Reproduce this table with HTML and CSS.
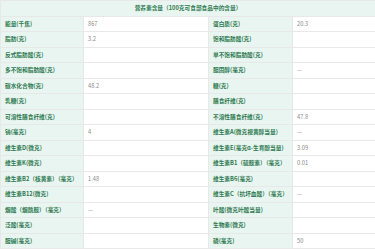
FILE: index.html
```html
<!DOCTYPE html>
<html lang="zh-CN">
<head>
<meta charset="utf-8">
<link rel="stylesheet" href="styles.css">
</head>
<body>
<table class="nutri">
  <colgroup>
    <col class="c-l1"><col class="c-v1"><col class="c-l2"><col class="c-v2">
  </colgroup>
  <thead>
    <tr><th colspan="4" class="head">营养素含量（100克可食部食品中的含量）</th></tr>
  </thead>
  <tbody>
    <tr><td class="lab">能量(千焦)</td><td class="val">867</td><td class="lab">蛋白质(克)</td><td class="val">20.3</td></tr>
    <tr><td class="lab">脂肪(克)</td><td class="val">3.2</td><td class="lab">饱和脂肪酸(克)</td><td class="val"></td></tr>
    <tr><td class="lab">反式脂肪酸(克)</td><td class="val"></td><td class="lab">单不饱和脂肪酸(克)</td><td class="val"></td></tr>
    <tr><td class="lab">多不饱和脂肪酸(克)</td><td class="val"></td><td class="lab">胆固醇(毫克)</td><td class="val">—</td></tr>
    <tr><td class="lab">碳水化合物(克)</td><td class="val">48.2</td><td class="lab">糖(克)</td><td class="val"></td></tr>
    <tr><td class="lab">乳糖(克)</td><td class="val"></td><td class="lab">膳食纤维(克)</td><td class="val"></td></tr>
    <tr><td class="lab">可溶性膳食纤维(克)</td><td class="val"></td><td class="lab">不溶性膳食纤维(克)</td><td class="val">47.8</td></tr>
    <tr><td class="lab">钠(毫克)</td><td class="val">4</td><td class="lab">维生素A(微克视黄醇当量)</td><td class="val">—</td></tr>
    <tr><td class="lab">维生素D(微克)</td><td class="val"></td><td class="lab">维生素E(毫克α-生育酚当量)</td><td class="val">3.09</td></tr>
    <tr><td class="lab">维生素K(微克)</td><td class="val"></td><td class="lab">维生素B1（硫胺素）（毫克）</td><td class="val">0.01</td></tr>
    <tr><td class="lab">维生素B2（核黄素）（毫克）</td><td class="val">1.48</td><td class="lab">维生素B6(毫克)</td><td class="val"></td></tr>
    <tr><td class="lab">维生素B12(微克)</td><td class="val"></td><td class="lab">维生素C（抗坏血酸）（毫克）</td><td class="val">—</td></tr>
    <tr><td class="lab">烟酸（烟酰胺）（毫克）</td><td class="val">—</td><td class="lab">叶酸(微克叶酸当量)</td><td class="val"></td></tr>
    <tr><td class="lab">泛酸(毫克)</td><td class="val"></td><td class="lab">生物素(微克)</td><td class="val"></td></tr>
    <tr><td class="lab">胆碱(毫克)</td><td class="val"></td><td class="lab">磷(毫克)</td><td class="val">50</td></tr>
  </tbody>
</table>
</body>
</html>
```

FILE: styles.css
```css
html, body {
  margin: 0;
  padding: 0;
  background: #ffffff;
}

.nutri {
  width: 375px;
  table-layout: fixed;
  border-collapse: collapse;
  font-family: "Noto Sans CJK SC", "Noto Sans", sans-serif;
  font-size: 5.7px;
  line-height: 1;
}

.c-l1 { width: 83px; }
.c-v1 { width: 125px; }
.c-l2 { width: 84px; }
.c-v2 { width: 83px; }

.nutri th,
.nutri td {
  height: 14.5px;
  padding: 0 4px;
  border: 1px solid #e8e8e8;
  text-align: left;
  vertical-align: middle;
  white-space: nowrap;
  overflow: hidden;
}

.nutri .head {
  background: #e9f5f0;
  color: #2f7a52;
  font-weight: bold;
  text-align: center;
}

.nutri .lab {
  background: #e9f5f0;
  color: #2f7a52;
  font-weight: bold;
}

.nutri .val {
  background: #ffffff;
  color: #8a8a8a;
}
```
